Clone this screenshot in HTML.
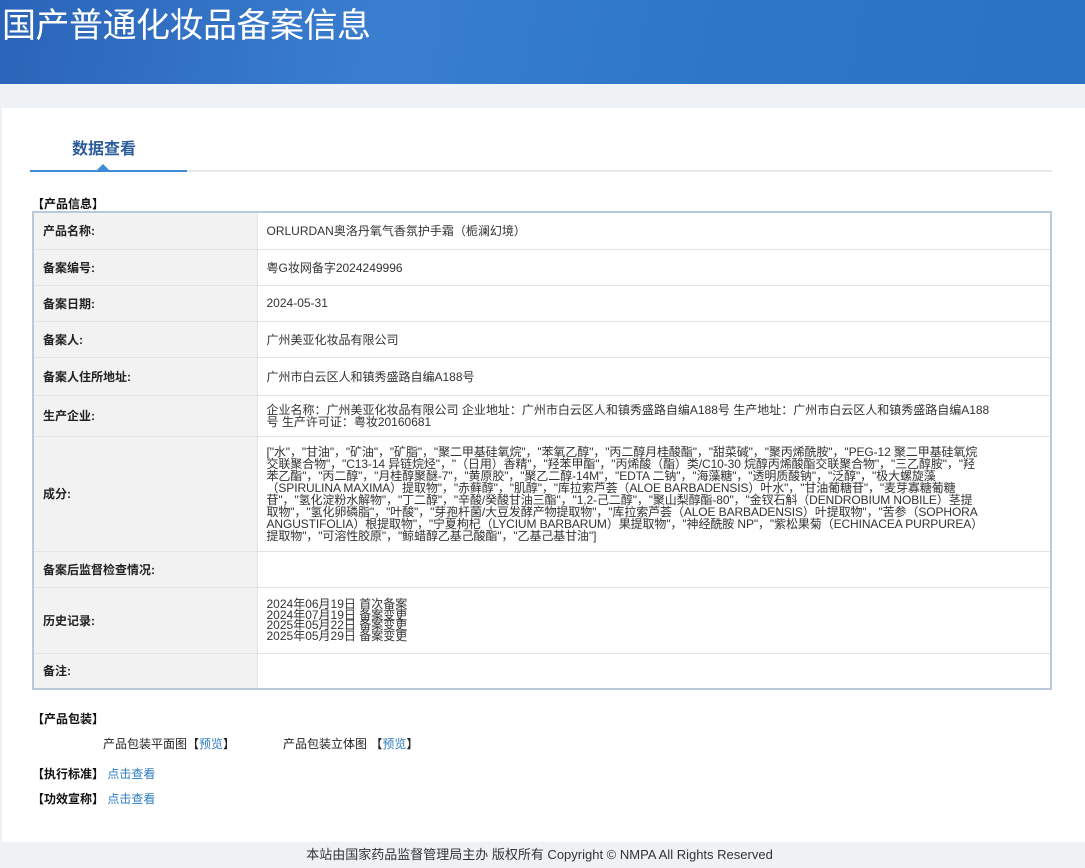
<!DOCTYPE html>
<html><head><meta charset="utf-8"><style>
*{margin:0;padding:0;box-sizing:border-box}
body{width:1085px;height:867px;overflow:hidden;background:#eef2f5;font-family:"Liberation Sans","Noto Sans CJK SC",sans-serif;color:#333;font-size:12px;position:relative}
.hdr{position:absolute;left:0;top:0;width:1085px;height:84px;background:linear-gradient(100deg,#2a64b8 0%,#3a7ed0 35%,#2f78c8 60%,#2a72c4 100%)}
.hdr h1{position:absolute;left:2px;top:-2px;font-size:34px;font-weight:normal;color:#fff;letter-spacing:-0.5px}
.panel{position:absolute;left:2px;top:108px;width:1083px;height:734px;background:#fff}
.tab{position:absolute;left:72px;top:135px;font-size:16px;font-weight:bold;color:#2b5d9a}
.line{position:absolute;left:30px;top:170px;width:1022px;height:2px;background:#e6e9ec}
.line2{position:absolute;left:30px;top:170px;width:157px;height:2px;background:#3d8ad6}
.tri{position:absolute;left:97px;top:164px;width:0;height:0;border-left:6px solid transparent;border-right:6px solid transparent;border-bottom:6px solid #3d8ad6}
.sec{position:absolute;font-size:12px;font-weight:bold;color:#111}
table{position:absolute;left:32px;top:211px;width:1020px;border-collapse:collapse;border:2px solid #b7c9db}
td{border-bottom:1px solid #e3e3e3;font-size:12px;vertical-align:middle}
td.k{width:224px;background:#f2f2f2;font-weight:bold;padding-left:9px;color:#222;border-right:1px solid #e3e3e3}
td.v{padding-left:9px;color:#333}
.ing{line-height:12px;font-size:12px;letter-spacing:-0.1px;white-space:nowrap}
.hist{line-height:10.5px;font-size:12px}
a{color:#2d7cc0;text-decoration:none}
.foot{position:absolute;left:0;top:842px;width:1085px;text-align:center;padding-right:6px;font-size:13px;color:#333;line-height:26px}
</style></head><body>
<div class="hdr"><h1>国产普通化妆品备案信息</h1></div>
<div class="panel"></div>
<div class="tab">数据查看</div>
<div class="line"></div><div class="line2"></div><div class="tri"></div>
<div class="sec" style="left:32px;top:195px">【产品信息】</div>
<table>
<tr style="height:37px"><td class="k">产品名称:</td><td class="v">ORLURDAN奥洛丹氧气香氛护手霜（栀澜幻境）</td></tr>
<tr style="height:36px"><td class="k">备案编号:</td><td class="v">粤G妆网备字2024249996</td></tr>
<tr style="height:36px"><td class="k">备案日期:</td><td class="v">2024-05-31</td></tr>
<tr style="height:36px"><td class="k">备案人:</td><td class="v">广州美亚化妆品有限公司</td></tr>
<tr style="height:38px"><td class="k">备案人住所地址:</td><td class="v">广州市白云区人和镇秀盛路自编A188号</td></tr>
<tr style="height:41px"><td class="k">生产企业:</td><td class="v" style="line-height:12px">企业名称：广州美亚化妆品有限公司 企业地址：广州市白云区人和镇秀盛路自编A188号 生产地址：广州市白云区人和镇秀盛路自编A188<br>号 生产许可证：粤妆20160681</td></tr>
<tr style="height:115px"><td class="k">成分:</td><td class="v ing">["水"，"甘油"，"矿油"，"矿脂"，"聚二甲基硅氧烷"，"苯氧乙醇"，"丙二醇月桂酸酯"，"甜菜碱"，"聚丙烯酰胺"，"PEG-12 聚二甲基硅氧烷<br>交联聚合物"，"C13-14 异链烷烃"，"（日用）香精"，"羟苯甲酯"，"丙烯酸（酯）类/C10-30 烷醇丙烯酸酯交联聚合物"，"三乙醇胺"，"羟<br>苯乙酯"，"丙二醇"，"月桂醇聚醚-7"，"黄原胶"，"聚乙二醇-14M"，"EDTA 二钠"，"海藻糖"，"透明质酸钠"，"泛醇"，"极大螺旋藻<br>（SPIRULINA MAXIMA）提取物"，"赤藓醇"，"肌醇"，"库拉索芦荟（ALOE BARBADENSIS）叶水"，"甘油葡糖苷"，"麦芽寡糖葡糖<br>苷"，"氢化淀粉水解物"，"丁二醇"，"辛酸/癸酸甘油三酯"，"1,2-己二醇"，"聚山梨醇酯-80"，"金钗石斛（DENDROBIUM NOBILE）茎提<br>取物"，"氢化卵磷脂"，"叶酸"，"芽孢杆菌/大豆发酵产物提取物"，"库拉索芦荟（ALOE BARBADENSIS）叶提取物"，"苦参（SOPHORA<br>ANGUSTIFOLIA）根提取物"，"宁夏枸杞（LYCIUM BARBARUM）果提取物"，"神经酰胺 NP"，"紫松果菊（ECHINACEA PURPUREA）<br>提取物"，"可溶性胶原"，"鲸蜡醇乙基己酸酯"，"乙基己基甘油"]</td></tr>
<tr style="height:36px"><td class="k">备案后监督检查情况:</td><td class="v"></td></tr>
<tr style="height:66px"><td class="k">历史记录:</td><td class="v hist">2024年06月19日 首次备案<br>2024年07月19日 备案变更<br>2025年05月22日 备案变更<br>2025年05月29日 备案变更</td></tr>
<tr style="height:36px"><td class="k">备注:</td><td class="v"></td></tr>
</table>
<div class="sec" style="left:32px;top:710px">【产品包装】</div>
<div style="position:absolute;left:103px;top:735px;font-size:12px;color:#222">产品包装平面图【<a>预览</a>】</div>
<div style="position:absolute;left:283px;top:735px;font-size:12px;color:#222">产品包装立体图 【<a>预览</a>】</div>
<div class="sec" style="left:32px;top:765px">【执行标准】 <a style="font-weight:normal">点击查看</a></div>
<div class="sec" style="left:32px;top:790px">【功效宣称】 <a style="font-weight:normal">点击查看</a></div>
<div class="foot">本站由国家药品监督管理局主办 版权所有 Copyright © NMPA All Rights Reserved</div>
</body></html>
